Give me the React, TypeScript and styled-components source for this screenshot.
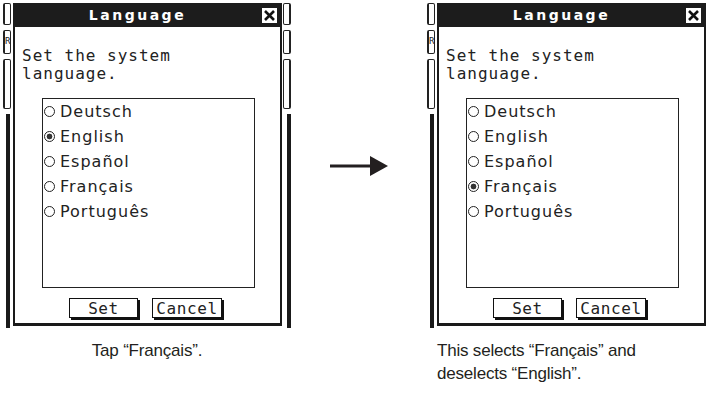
import React from 'react';
import styled, { createGlobalStyle } from 'styled-components';

const LANGUAGES = ['Deutsch', 'English', 'Español', 'Français', 'Português'];

const GlobalStyle = createGlobalStyle`
  html, body {
    margin: 0;
    padding: 0;
    background: #fff;
  }
  #root {
    width: 707px;
    height: 395px;
  }
`;

const Page = styled.div`
  display: flex;
  width: 707px;
  height: 395px;
  padding: 3px 0 0 3px;
  box-sizing: border-box;
  overflow: hidden;
  background: #fff;
  color: #231f20;
`;

const Step = styled.div`
  flex: none;
  width: 288px;
  display: flex;
  flex-direction: column;
`;

const Screen = styled.div`
  display: flex;
  height: 325px;
`;

const Strip = styled.div<{ $side: 'left' | 'right' }>`
  flex: none;
  width: ${({ $side }) => ($side === 'left' ? 10 : 9)}px;
  display: flex;
  flex-direction: column;
  align-items: ${({ $side }) => ($side === 'left' ? 'flex-start' : 'flex-end')};
`;

const Tab = styled.div<{ $side: 'left' | 'right'; $h: number }>`
  width: 8px;
  height: ${({ $h }) => $h}px;
  box-sizing: border-box;
  border: 1px solid #222;
  border-${({ $side }) => $side}-width: 2px;
  border-radius: 2px;
  margin-bottom: 5px;
  background: #fff;
  font: 9px/20px 'DejaVu Sans Mono', monospace;
  color: #222;
`;

const Rail = styled.div<{ $side: 'left' | 'right' }>`
  flex: 1;
  width: 4px;
  margin-left: ${({ $side }) => ($side === 'left' ? '3px' : '0')};
  background: #1a1a1a;
`;

const Dialog = styled.div`
  flex: none;
  width: 269px;
  height: 323px;
  display: flex;
  flex-direction: column;
`;

const TitleBar = styled.div`
  height: 24px;
  display: flex;
  align-items: center;
  padding-right: 5px;
  background: #1c1c1c;
`;

const Title = styled.div`
  flex: 1;
  text-align: center;
  color: #fff;
  font: bold 14px 'DejaVu Sans', sans-serif;
  letter-spacing: 2.5px;
`;

const CloseBox = styled.div`
  width: 15px;
  height: 15px;
  display: grid;
  place-items: center;
  background: #fff;
`;

const Body = styled.div`
  flex: 1;
  display: flex;
  flex-direction: column;
  align-items: flex-start;
  padding: 20px 0 0 7px;
  border: solid #1a1a1a;
  border-width: 0 2px 3px 2px;
  background: #fff;
`;

const Message = styled.div`
  font: 16px/18px 'DejaVu Sans Mono', monospace;
  letter-spacing: 1px;
  white-space: pre-line;
  color: #222;
`;

const ListBox = styled.div`
  margin: 15px 0 0 20px;
  width: 213px;
  height: 190px;
  box-sizing: border-box;
  border: 1px solid #222;
`;

const Row = styled.div`
  height: 25px;
  display: flex;
  align-items: center;
  font: 16px 'DejaVu Sans', sans-serif;
  letter-spacing: 1px;
  color: #222;
`;

const Radio = styled.span<{ $on: boolean }>`
  flex: none;
  width: 11px;
  height: 11px;
  margin: 0 5px 0 1px;
  box-sizing: border-box;
  border-radius: 50%;
  border: 1.5px solid #222;
  background: ${({ $on }) =>
    $on ? 'radial-gradient(circle, #333 0 2.6px, #fff 3.2px)' : '#fff'};
`;

const ButtonRow = styled.div`
  display: flex;
  gap: 14px;
  margin: 10px 0 0 47px;
`;

const Button = styled.div<{ $w: number }>`
  width: ${({ $w }) => $w}px;
  height: 20px;
  box-sizing: border-box;
  border: 1.5px solid #111;
  box-shadow: 2px 2px 0 #111;
  display: flex;
  align-items: center;
  justify-content: center;
  font: 16px 'DejaVu Sans Mono', monospace;
  letter-spacing: 0.6px;
  color: #222;
  background: #fff;
`;

const ArrowBox = styled.div`
  flex: none;
  width: 136px;
  padding: 153px 0 0 39px;
  box-sizing: border-box;
`;

const Caption = styled.div<{ $align: 'center' | 'left' }>`
  margin-top: 11px;
  padding-left: ${({ $align }) => ($align === 'left' ? '10px' : '0')};
  text-align: ${({ $align }) => $align};
  font: 17px/23px 'Liberation Sans', Arial, sans-serif;
  letter-spacing: -0.2px;
  color: #231f20;
`;

function SideStrip({ side }: { side: 'left' | 'right' }) {
  return (
    <Strip $side={side}>
      <Tab $side={side} $h={22} />
      <Tab $side={side} $h={24}>
        {side === 'left' ? 'R' : ''}
      </Tab>
      <Tab $side={side} $h={50} />
      <Rail $side={side} />
    </Strip>
  );
}

function LanguageDialog({ selected }: { selected: string }) {
  return (
    <Screen>
      <SideStrip side="left" />
      <Dialog>
        <TitleBar>
          <Title>Language</Title>
          <CloseBox>
            <svg width="11" height="11" viewBox="0 0 11 11">
              <path d="M1 1 L10 10 M10 1 L1 10" stroke="#111" strokeWidth="2.6" />
            </svg>
          </CloseBox>
        </TitleBar>
        <Body>
          <Message>{'Set the system\nlanguage.'}</Message>
          <ListBox>
            {LANGUAGES.map((lang) => (
              <Row key={lang}>
                <Radio $on={lang === selected} />
                {lang}
              </Row>
            ))}
          </ListBox>
          <ButtonRow>
            <Button $w={69}>Set</Button>
            <Button $w={70}>Cancel</Button>
          </ButtonRow>
        </Body>
      </Dialog>
      <SideStrip side="right" />
    </Screen>
  );
}

export default function App() {
  return (
    <>
      <GlobalStyle />
      <Page>
        <Step>
          <LanguageDialog selected="English" />
          <Caption $align="center">Tap “Français”.</Caption>
        </Step>
        <ArrowBox>
          <svg width="58" height="20" viewBox="0 0 58 20">
            <path d="M0 10 H42" stroke="#231f20" strokeWidth="3" />
            <polygon points="40,0 58,10 40,20" fill="#231f20" />
          </svg>
        </ArrowBox>
        <Step>
          <LanguageDialog selected="Français" />
          <Caption $align="left">
            This selects “Français” and
            <br />
            deselects “English”.
          </Caption>
        </Step>
      </Page>
    </>
  );
}
